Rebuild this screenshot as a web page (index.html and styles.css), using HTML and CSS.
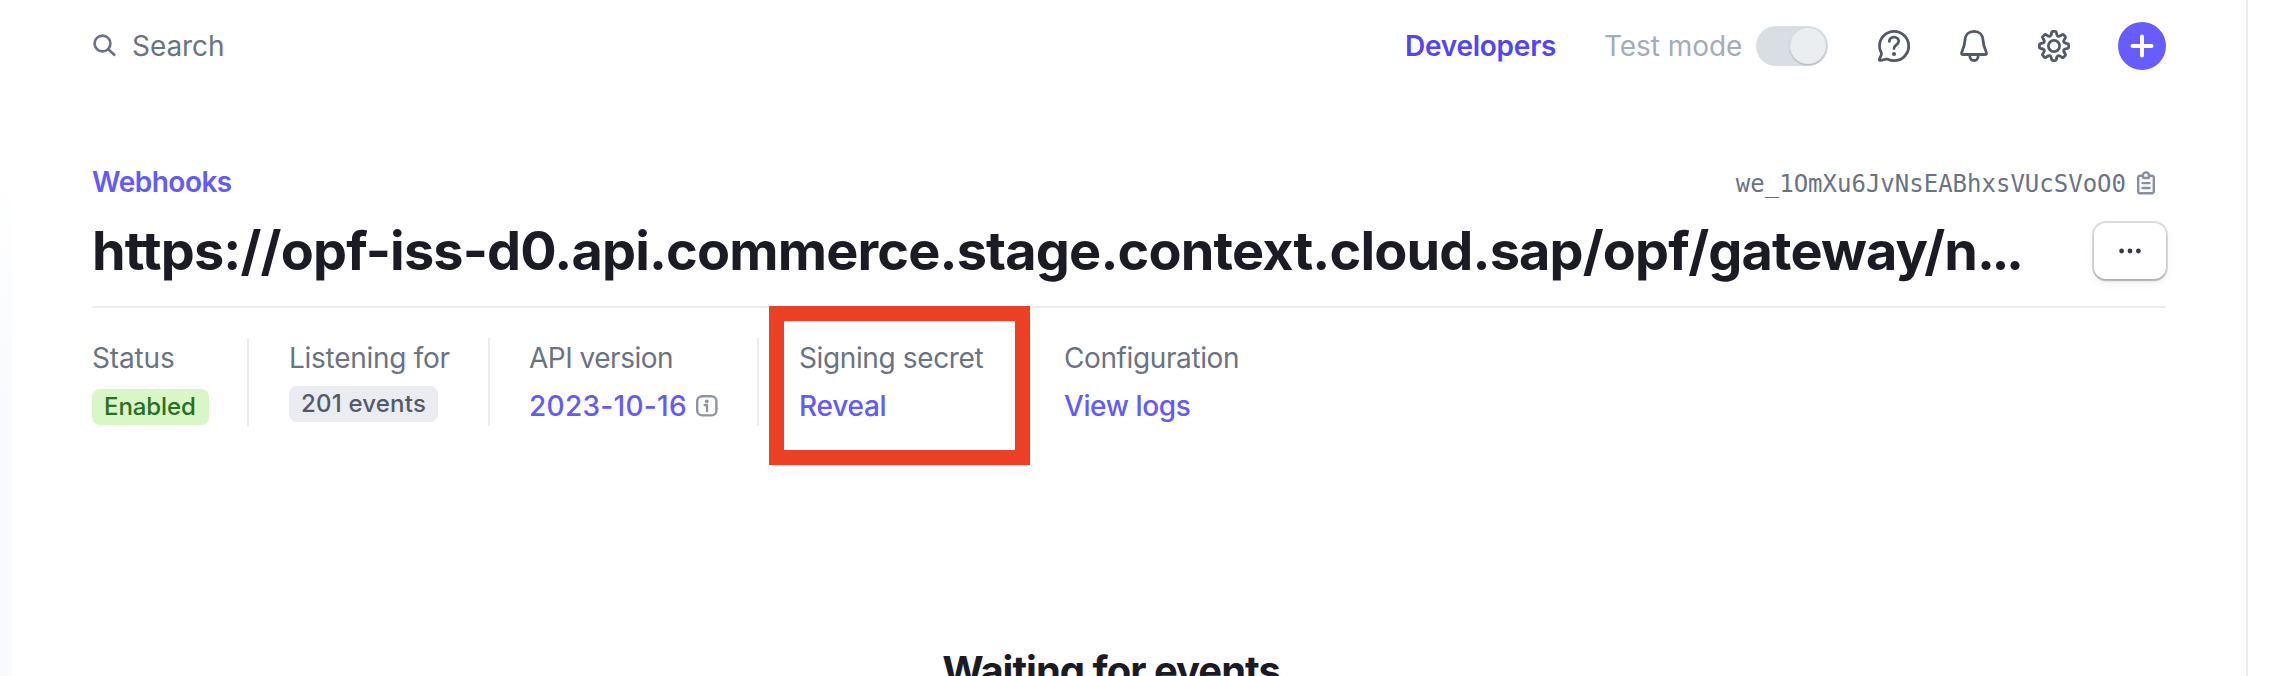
FILE: index.html
```html
<!DOCTYPE html>
<html lang="en">
<head>
<meta charset="utf-8">
<title>Webhooks</title>
<link rel="stylesheet" href="styles.css">
</head>
<body>
<div class="page">
  <div class="edge"></div>
  <main class="main">
    <header class="topbar">
      <div class="search">
        <svg class="search-icon" width="24" height="24" viewBox="0 0 24 24"><circle cx="10.5" cy="9.5" r="7.9"/><path d="M16.2 15.2l6 5.6"/></svg>
        <span class="search-label">Search</span>
      </div>
      <nav class="tools">
        <a class="developers"><span>Developers</span></a>
        <span class="testmode">Test mode</span>
        <span class="toggle"><span class="knob"></span></span>
        <svg class="tool help" width="32" height="32" viewBox="0 0 32 32"><path d="M1.5 16A14.6 14.6 0 1 1 16 30.6c-2 0-4-.5-5.5-1.2-.8-.4-1.5-.4-2.3-.2l-5.7 1.3c-.8.2-1.3-.4-1.1-1.1l1.9-4.6c.3-.8.2-1.6-.1-2.4C1.9 20.3 1.5 18.5 1.5 16Z"/><path d="M11.3 11.4C11.3 8.8 13.3 7.1 16 7.1s4.7 1.7 4.7 4.2c0 3.7-4.7 3.5-4.7 7.2"/><circle class="dot" cx="16" cy="24" r="2.1"/></svg>
        <svg class="tool" width="32" height="32" viewBox="0 0 32 32"><path d="M16 1.4c-5.3 0-8.8 3.6-9 8.6-.2 5-1.1 7.5-3.1 11.8-.9 2 0 2.7 1.2 2.7h21.8c1.2 0 2.1-.7 1.2-2.7C26.1 17.5 25.2 15 25 10c-.2-5-3.7-8.6-9-8.600z"/><path d="M11.7 25.5c.2 3 2 5 4.3 5s4.1-2 4.3-5"/></svg>
        <svg class="tool" width="32" height="32" viewBox="-16 -16 32 32">
          <defs><path id="tooth" d="M-2.8-11.6L-2.4-13.6Q-2.2-14.6-1.2-14.6H1.2Q2.2-14.6 2.4-13.6L2.8-11.6C3.2-9.6 4.53-9.05 6.22-10.18"/></defs>
          <use href="#tooth"/><use href="#tooth" transform="rotate(45)"/><use href="#tooth" transform="rotate(90)"/><use href="#tooth" transform="rotate(135)"/><use href="#tooth" transform="rotate(180)"/><use href="#tooth" transform="rotate(225)"/><use href="#tooth" transform="rotate(270)"/><use href="#tooth" transform="rotate(315)"/>
          <circle r="5.6"/>
        </svg>
        <span class="create"><svg width="48" height="48" viewBox="0 0 48 48"><path d="M14.5 24h19M24 14.5v19"/></svg></span>
      </nav>
    </header>

    <section class="heading">
      <div class="crumbs">
        <a class="crumb">Webhooks</a>
        <span class="endpoint-id">we_1OmXu6JvNsEABhxsVUcSVoO0</span>
        <svg class="clipboard" width="18" height="24" viewBox="0 0 18 24"><path d="M5.5 4.7H3A1.8 1.8 0 0 0 1.2 6.5v14A1.8 1.8 0 0 0 3 22.3h12a1.8 1.8 0 0 0 1.8-1.8v-14A1.8 1.8 0 0 0 15 4.7h-2.5"/><path d="M6 4.900C6 2.7 7.2 1.4 9 1.4s3 1.3 3 3.500v1.300a.8.8 0 0 1-.8.8H6.800a.8.8 0 0 1-.8-.8z"/><path d="M5.5 12.1h7M5.5 17h7"/></svg>
      </div>
      <div class="title-row">
        <h1 class="title">https://opf-iss-d0.api.commerce.stage.context.cloud.sap/opf/gateway/n<span class="dots">...</span></h1>
        <span class="more"><svg width="24" height="8" viewBox="0 0 24 8"><circle cx="3.6" cy="4" r="2.4"/><circle cx="12" cy="4" r="2.4"/><circle cx="20.4" cy="4" r="2.4"/></svg></span>
      </div>
    </section>

    <section class="stats">
      <div class="stat status"><span class="label">Status</span><span class="badge enabled">Enabled</span></div>
      <div class="stat listening"><span class="label">Listening for</span><span class="badge events">201 events</span></div>
      <div class="stat version"><span class="label">API version</span>
        <span class="value"><a class="link">2023-10-16</a><svg class="info" width="22" height="22" viewBox="0 0 22 22"><rect x="1.2" y="1.2" width="19.2" height="19.2" rx="5"/><path d="M8.7 10h2.3v6"/><circle cx="10.8" cy="6.3" r="1.9"/></svg></span>
      </div>
      <div class="stat secret"><span class="label">Signing secret</span><span class="value"><a class="link">Reveal</a></span><span class="highlight"></span></div>
      <div class="stat config"><span class="label">Configuration</span><span class="value"><a class="link">View logs</a></span></div>
    </section>

    <h2 class="waiting">Waiting for events</h2>
  </main>
</div>
</body>
</html>
```
FILE: styles.css
```css
* { box-sizing: border-box; }

body {
  margin: 0;
  height: 676px;
  overflow: hidden;
  background: #fff;
  color: #6a7383;
  font: 400 28px/40px Inter, sans-serif;
}

svg { display: block; fill: none; stroke-linecap: round; stroke-linejoin: round; }

.page { display: flex; height: 676px; overflow: hidden; }

.edge {
  width: 12px;
  background: linear-gradient(#fff 170px, #f8fafd 420px);
}

.main {
  width: 2236px;
  height: 676px;
  padding: 0 80px;
  border-right: 2px solid #ebecf1;
}

.topbar {
  display: flex;
  align-items: center;
  justify-content: space-between;
  height: 92px;
}

.search { display: flex; align-items: center; }
.search-icon { margin-right: 16px; stroke: #6a7383; stroke-width: 2.7; }
.search-label { letter-spacing: -0.07px; }

.tools { display: flex; align-items: center; }
.developers { width: 199px; color: #5145f6; font-weight: 600; letter-spacing: -0.25px; }
.testmode { width: 152px; color: #a3acba; letter-spacing: -0.06px; }

.toggle {
  display: flex;
  justify-content: flex-end;
  width: 72px;
  height: 40px;
  margin-right: 50px;
  padding: 2px;
  border-radius: 20px;
  background: #d8dee4;
}

.knob {
  width: 36px;
  height: 36px;
  border-radius: 50%;
  background: #ebeef1;
  box-shadow: 0 1px 2px rgba(60, 66, 87, .3);
}

.tool { margin-right: 48px; stroke: #545969; stroke-width: 2.8; }
.dot { fill: #545969; stroke: none; }

.create { width: 48px; height: 48px; border-radius: 50%; background: #675dff; }
.create svg { stroke: #fff; stroke-width: 4; }

.heading { padding: 70px 0 23px; border-bottom: 2px solid #ebecf1; }

.crumbs { display: flex; align-items: baseline; height: 40px; }
.crumb { flex: 1; color: #625afa; font-weight: 600; letter-spacing: -0.5px; }
.endpoint-id { margin-right: 11px; font: 24px/36px "DejaVu Sans Mono", monospace; }
.clipboard {
  align-self: flex-start;
  margin: 9px 11px 0 0;
  stroke: #87909f;
  stroke-width: 2.4;
}

.title-row { display: flex; align-items: center; justify-content: space-between; height: 64px; margin-top: 17px; }
.title {
  margin: 0;
  color: #1a1b25;
  font-size: 54px;
  font-weight: 700;
  line-height: 64px;
  letter-spacing: -0.85px;
  white-space: nowrap;
}
.dots { letter-spacing: -3.6px; }

.more {
  display: flex;
  align-items: center;
  justify-content: center;
  width: 72px;
  height: 56px;
  border-radius: 12px;
  background: #fff;
  box-shadow: 0 0 0 2px rgba(0, 0, 0, .13), 0 2px 2px rgba(0, 0, 0, .18), 0 4px 10px rgba(64, 68, 82, .08);
}
.more svg { fill: #353a44; }

.stats { display: flex; height: 118px; padding-top: 30px; }
.stat {
  display: flex;
  flex-direction: column;
  align-items: flex-start;
  height: 88px;
  margin-right: 40px;
  border-right: 2px solid #ebecf1;
  white-space: nowrap;
}
.label { margin-bottom: 8px; }
.value { display: flex; align-items: center; height: 40px; }
.link { color: #625afa; font-weight: 500; }

.status { width: 157px; }
.status .label { letter-spacing: -0.14px; }
.listening { width: 201px; margin-right: 39px; }
.listening .label { letter-spacing: -0.28px; }
.version { width: 230px; }
.version .label { letter-spacing: -0.5px; }
.version .link { letter-spacing: 0.29px; }
.secret { position: relative; width: 225px; }
.secret .label { letter-spacing: -0.38px; }
.secret .link { letter-spacing: -0.25px; }
.config { border-right: 0; }
.config .label { letter-spacing: -0.39px; }
.config .link { letter-spacing: -0.4px; }

.badge {
  height: 36px;
  padding: 0 12px;
  border-radius: 8px;
  font-size: 24px;
  font-weight: 500;
  line-height: 36px;
}
.enabled { width: 117px; margin-top: 3px; background: #d9f6c6; color: #29701f; letter-spacing: -0.09px; }
.events { width: 149px; background: #ebecf1; color: #545969; letter-spacing: 0.2px; }

.info { margin-left: 9px; stroke: #8d95a5; stroke-width: 2.4; }
.info circle { fill: #8d95a5; stroke: none; }

/* Callout frame drawn over the signing secret column */
.highlight {
  position: absolute;
  top: -32px;
  left: -30px;
  width: 261px;
  height: 159px;
  border: 15px solid #eb4026;
}

.waiting {
  margin: 221px 36px 0 0;
  color: #1a1b25;
  font-size: 40px;
  font-weight: 700;
  line-height: 48px;
  letter-spacing: -1px;
  text-align: center;
}
```
